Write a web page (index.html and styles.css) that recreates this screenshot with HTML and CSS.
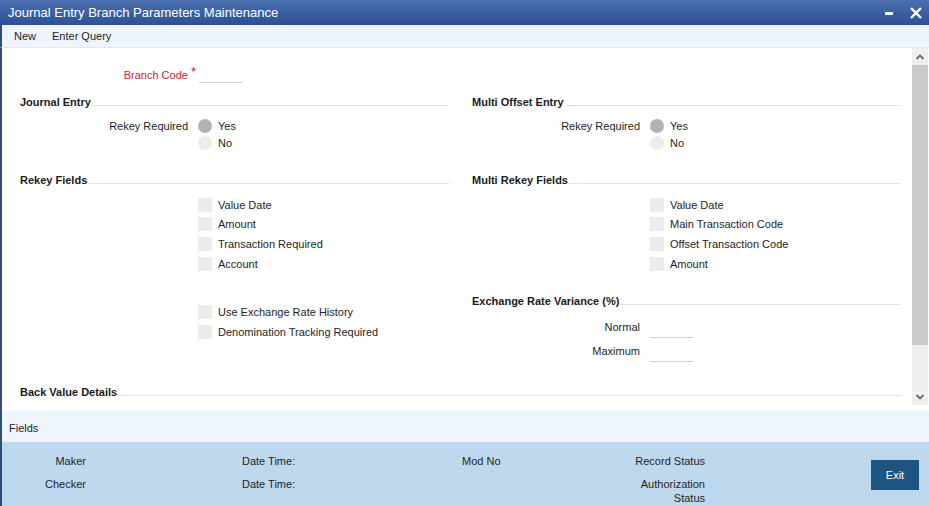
FILE: index.html
```html
<!DOCTYPE html>
<html>
<head>
<meta charset="utf-8">
<link rel="stylesheet" href="styles.css">
</head>
<body>
<div class="window">
  <div class="titlebar">
    <span class="title">Journal Entry Branch Parameters Maintenance</span>
    <div class="winctl">
      <svg class="ico" width="12" height="12" viewBox="0 0 12 12"><rect x="2" y="5" width="8" height="3" fill="#fff"/></svg>
      <svg class="ico" width="14" height="14" viewBox="0 0 14 14"><path d="M2 2 L12 12 M12 2 L2 12" stroke="#fff" stroke-width="2.4" fill="none"/></svg>
    </div>
  </div>
  <div class="toolbar">
    <span class="tool">New</span>
    <span class="tool">Enter Query</span>
  </div>
  <div class="main">
    <div class="content">
      <div class="row branch">
        <label class="lbl req">Branch Code <span class="star">*</span></label>
        <span class="input short"></span>
      </div>
      <div class="cols">
        <div class="col">
          <div class="hdr"><span>Journal Entry</span><i></i></div>
          <div class="radios">
            <div class="rrow"><span class="lbl">Rekey Required</span><span class="radio on"></span><span class="opt">Yes</span></div>
            <div class="rrow"><span class="lbl"></span><span class="radio"></span><span class="opt">No</span></div>
          </div>
          <div class="hdr sp"><span>Rekey Fields</span><i></i></div>
          <div class="checks">
            <div class="crow"><span class="lbl"></span><span class="box"></span><span class="opt">Value Date</span></div>
            <div class="crow"><span class="lbl"></span><span class="box"></span><span class="opt">Amount</span></div>
            <div class="crow"><span class="lbl"></span><span class="box"></span><span class="opt">Transaction Required</span></div>
            <div class="crow"><span class="lbl"></span><span class="box"></span><span class="opt">Account</span></div>
          </div>
          <div class="checks extra">
            <div class="crow"><span class="lbl"></span><span class="box"></span><span class="opt">Use Exchange Rate History</span></div>
            <div class="crow"><span class="lbl"></span><span class="box"></span><span class="opt">Denomination Tracking Required</span></div>
          </div>
        </div>
        <div class="col">
          <div class="hdr"><span>Multi Offset Entry</span><i></i></div>
          <div class="radios">
            <div class="rrow"><span class="lbl">Rekey Required</span><span class="radio on"></span><span class="opt">Yes</span></div>
            <div class="rrow"><span class="lbl"></span><span class="radio"></span><span class="opt">No</span></div>
          </div>
          <div class="hdr sp"><span>Multi Rekey Fields</span><i></i></div>
          <div class="checks">
            <div class="crow"><span class="lbl"></span><span class="box"></span><span class="opt">Value Date</span></div>
            <div class="crow"><span class="lbl"></span><span class="box"></span><span class="opt">Main Transaction Code</span></div>
            <div class="crow"><span class="lbl"></span><span class="box"></span><span class="opt">Offset Transaction Code</span></div>
            <div class="crow"><span class="lbl"></span><span class="box"></span><span class="opt">Amount</span></div>
          </div>
          <div class="hdr sp2"><span>Exchange Rate Variance (%)</span><i></i></div>
          <div class="irow first"><span class="lbl">Normal</span><span class="input"></span></div>
          <div class="irow"><span class="lbl">Maximum</span><span class="input"></span></div>
        </div>
      </div>
      <div class="hdr full"><span>Back Value Details</span><i></i></div>
    </div>
    <div class="scrollbar">
      <div class="sbtn"><svg width="10" height="8" viewBox="0 0 10 8"><path d="M1.5 6 L5 2.5 L8.5 6" stroke="#666" stroke-width="1.8" fill="none"/></svg></div>
      <div class="thumb"></div>
      <div class="track"></div>
      <div class="sbtn"><svg width="10" height="8" viewBox="0 0 10 8"><path d="M1.5 2 L5 5.5 L8.5 2" stroke="#666" stroke-width="1.8" fill="none"/></svg></div>
    </div>
  </div>
  <div class="fieldsbar">Fields</div>
  <div class="footer">
    <div class="audit">
      <span class="r">Maker</span><span></span><span>Date Time:</span><span>Mod No</span><span class="r">Record Status</span>
      <span class="r">Checker</span><span></span><span>Date Time:</span><span></span><span class="r">Authorization<br>Status</span>
    </div>
    <button class="exit">Exit</button>
  </div>
</div>
</body>
</html>
```
FILE: styles.css
```css
* { box-sizing: border-box; }
html, body { margin: 0; padding: 0; }
body {
  width: 929px; height: 506px; overflow: hidden;
  font-family: "Liberation Sans", Arial, sans-serif;
  font-size: 11px; color: #1e1e1e; background: #fff;
}
.window { display: flex; flex-direction: column; height: 506px; }
.titlebar {
  height: 25px; flex: none;
  background: linear-gradient(#4a71b0, #2d5090);
  display: flex; align-items: center; justify-content: space-between;
  padding: 0 6px 0 8px; color: #fff;
}
.title { font-size: 13px; }
.winctl { display: flex; align-items: center; gap: 14px; }
.ico { display: block; }
.toolbar {
  height: 23px; flex: none;
  background: #eef4fc; border-left: 2px solid #2f4d7a;
  border-bottom: 1px solid #dfe7f0;
  display: flex; align-items: center; gap: 16px; padding-left: 12px;
}
.main {
  height: 363px; flex: none; display: flex;
  border-left: 2px solid #2f4d7a; overflow: hidden;
}
.content { flex: 1; padding: 16px 11px 0 18px; overflow: hidden; }
.lbl { width: 168px; text-align: right; flex: none; }
.row { display: flex; align-items: center; height: 20px; }
.branch .lbl { width: 176px; }
.req { color: #cc1a2c; }
.star { font-size: 13px; position: relative; top: -3px; color: #e0101e; }
.input { width: 43px; height: 20px; border-bottom: 1px solid #cfcfcf; margin-left: 10px; }
.branch .input { margin-left: 3px; align-self: flex-start; height: 19px; }
.cols { display: grid; grid-template-columns: 429px 429px; column-gap: 23px; margin-top: 10px; }
.col { display: flex; flex-direction: column; }
.hdr { display: flex; align-items: center; height: 16px; font-weight: bold; color: #1a1a1a; }
.hdr span { flex: none; }
.hdr i { flex: 1; height: 1px; background: #e3e3e3; margin-top: 6px; margin-left: 1px; }
.hdr.sp { margin-top: 21px; }
.hdr.sp2 { margin-top: 20px; }
.hdr.full { margin-top: 21px; width: 881px; }
.radios { margin-top: 7px; }
.rrow, .crow { display: flex; align-items: center; }
.rrow { height: 17px; }
.crow { height: 19.6px; }
.radio { width: 14px; height: 14px; border-radius: 50%; background: #ececec; margin-left: 10px; flex: none; }
.radio.on { background: #b2b2b2; }
.box { width: 14px; height: 14px; background: #ececec; margin-left: 10px; flex: none; }
.opt { margin-left: 6px; }
.checks { margin-top: 7px; }
.checks.extra { margin-top: 29px; }
.irow { display: flex; align-items: center; height: 24px; }
.irow.first { margin-top: 6px; }
.irow .input { height: 20px; margin-top: 2px; }
.scrollbar {
  width: 16px; flex: none; height: 357px; background: #efefef;
  display: flex; flex-direction: column; margin-right: 1px;
}
.sbtn { height: 17px; display: flex; align-items: center; justify-content: center; flex: none; }
.thumb { height: 280px; background: #c9c9c9; flex: none; }
.track { flex: 1; }
.fieldsbar {
  height: 31px; flex: none; background: #eef5fd;
  border-left: 2px solid #2f4d7a;
  display: flex; align-items: center; padding: 3px 0 0 7px;
}
.footer {
  flex: 1; background: #bed9ee; border-left: 2px solid #2f4d7a;
  display: flex; align-items: flex-start;
}
.audit {
  display: grid; grid-template-columns: 84px 156px 220px 143px 100px;
  row-gap: 9px; padding-top: 12px; line-height: 14px;
}
.audit .r { text-align: right; }
.exit {
  margin-left: 166px; margin-top: 18px;
  width: 48px; height: 30px; border: none; background: #1e5580; color: #fff;
  font-family: "Liberation Sans", Arial, sans-serif; font-size: 11px; padding: 0;
}
```
